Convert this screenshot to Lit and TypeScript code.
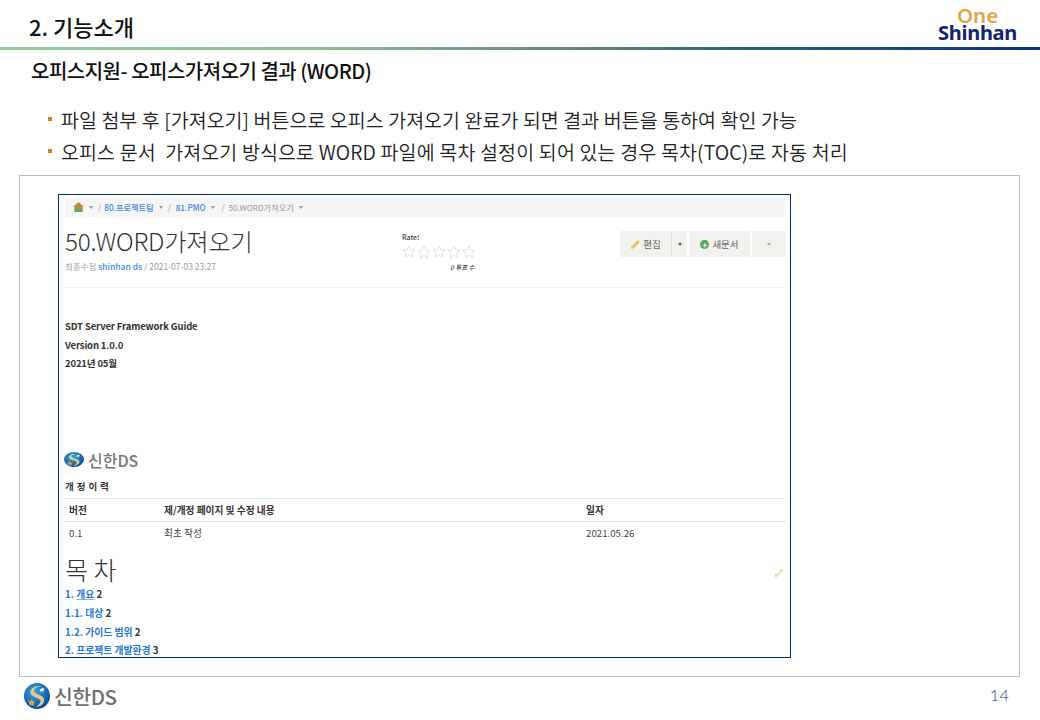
import { LitElement, html, css, svg } from "lit";
import { customElement } from "lit/decorators.js";

const globe = (id: string) => html`<svg class="globe" viewBox="0 0 26 26" preserveAspectRatio="none" aria-hidden="true">
  <defs>
    <radialGradient id="g${id}" cx="0.4" cy="0.35" r="0.75">
      <stop offset="0" stop-color="#3fa6dc"></stop>
      <stop offset="0.65" stop-color="#1565ad"></stop>
      <stop offset="1" stop-color="#0b3f80"></stop>
    </radialGradient>
  </defs>
  <circle cx="13" cy="13" r="13" fill="url(#g${id})"></circle>
  <path d="M17.5 3.2C11 2.2 6 5.5 6.6 10c.5 3.6 6.8 4.2 9.2 6.6 1.9 2-.4 5.4-3.8 7 4.6.4 8.6-3 8-7.4-.6-3.9-7.2-4.6-9.6-7-1.6-1.7.2-5 7.1-6z" fill="#e3c98a"></path>
  <path d="M16 6.6l3-1.8 1.8 2.2-1.8.2.6 2.6-2-1.8-2 .8z" fill="#eef6fb"></path>
  <path d="M4 17l2.4 1.2L8 16l1 2.6 2.2.2-1.6 2 .8 2.4L8 22l-2 .4z" fill="#d6a548"></path>
</svg>`;

const star = svg`<path d="M7 1l1.800 3.900 4.200.5-3.100 2.900.8 4.200L7 10.400 3.300 12.500l.8-4.200L1 5.400l4.200-.5z" fill="#fff" stroke="#e2e2e2" stroke-width="1"></path>`;

const pencil = (cls: string) => html`<svg class=${cls} viewBox="0 0 12 12" aria-hidden="true">
  <path d="M1 11l.8-3L8.500 1.300l2.200 2.200L4 10.200z" fill="currentColor"></path>
  <path d="M1 11l.8-3 2.200 2.200z" fill="#e8c9a0"></path>
</svg>`;

@customElement("app-root")
export class AppRoot extends LitElement {
  static styles = css`
    :host { display: block; width: 1040px; height: 720px; background: #fff; overflow: hidden; font-family: "Noto Sans CJK KR", "Noto Sans", sans-serif; color: #111; }
    .head { height: 47px; box-sizing: border-box; padding: 0 23px 0 29px; display: flex; justify-content: space-between; }
    .head h1 { margin: 0; padding-top: 11px; font-size: 22px; line-height: 30px; font-weight: 500; color: #111; }
    .brand { display: flex; flex-direction: column; align-items: center; padding-top: 7px; font-family: "Noto Sans", sans-serif; font-weight: 700; }
    .brand .one { font-size: 20.500px; line-height: 17px; color: #e2a544; font-weight: 600; }
    .brand .sh { font-size: 20px; line-height: 17px; color: #10256e; letter-spacing: -0.3px; }
    .rule { height: 3px; background: linear-gradient(90deg, #93cb9d 0%, #8ec096 30%, #5f8a78 55%, #2f5f78 72%, #0b3478 100%); }
    .sub { margin: 0; padding: 7px 0 0 31px; font-size: 20px; line-height: 28px; font-weight: 500; letter-spacing: -0.5px; color: #111; }
    .bullets { list-style: none; margin: 0; padding: 18px 0 0 48px; }
    .bullets li { display: flex; align-items: center; gap: 9px; height: 32px; font-size: 19.500px; color: #222; white-space: pre; font-weight: 350; word-spacing: 0.2px; }
    .bullets li.wide { letter-spacing: 0.1px; }
    .bullets li::before { content: ""; width: 4px; height: 4px; background: #c98a1b; flex: none; }
    .panel { margin: 8px 0 0 19px; width: 1001px; height: 502px; box-sizing: border-box; border: 1px solid #bdbdbd; padding: 18px 0 0 38px; }
    .shot { width: 733px; height: 464px; box-sizing: border-box; border: 1px solid #002d62; overflow: hidden; padding: 2px 5px 0 6px; position: relative; color: #333; }
    .crumb { height: 20px; background: #f5f5f5; display: flex; align-items: center; padding-left: 8px; font-size: 8.200px; color: #999; gap: 3px; white-space: pre; }
    .crumb svg { width: 11px; height: 10px; }
    .crumb a { color: #3d8ad6; font-weight: 500; }
    .caret { width: 0; height: 0; border: 2.500px solid transparent; border-top: 3px solid #999; border-bottom: 0; display: inline-block; margin: 0 2px; }
    .page-head { display: grid; grid-template-columns: 337px 1fr auto; height: 70px; border-bottom: 1px dotted #e6e6d2; }
    .page-head h2 { margin: 0; padding-top: 7px; font-size: 24.300px; line-height: 34px; font-weight: 300; color: #333; white-space: nowrap; letter-spacing: -0.2px; }
    .meta { font-size: 8.500px; line-height: 12px; color: #a0a0a0; margin-top: 2px; white-space: pre; }
    .meta a { color: #3d8ad6; font-weight: 500; }
    .rate { padding-top: 16px; font-size: 7px; line-height: 9px; color: #444; font-weight: 500; }
    .stars { display: flex; gap: 1px; margin-top: 3px; height: 14px; }
    .stars svg { width: 14px; height: 14px; }
    .votes { padding-left: 48px; margin-top: 4px; font-style: italic; font-size: 6.500px; line-height: 8px; color: #444; }
    .btns { display: flex; gap: 2px; padding-top: 14px; align-items: flex-start; }
    .btn { height: 26px; background: #f1f1ed; display: flex; align-items: center; justify-content: center; font-size: 9.500px; color: #666; gap: 2px; box-sizing: border-box; }
    .btn.edit { width: 52px; border-right: 1px solid #e2e2dd; }
    .btn.split { width: 15px; margin-left: -2px; }
    .btn.new { width: 61px; }
    .btn.more { width: 33px; }
    .btn .caret { border-top-color: #555; margin: 0; }
    .btn.more .caret { border-top-color: #aaa; }
    .btn svg.ic { width: 11px; height: 11px; color: #ecc04a; }
    .dot { width: 9px; height: 9px; border-radius: 50%; background: #5aa864; color: #fff; font-size: 8px; line-height: 9px; text-align: center; font-weight: 700; margin-right: 1px; }
    .doc { font-size: 9.500px; font-weight: 600; color: #333; }
    .doc p { margin: 0; line-height: 18.500px; white-space: nowrap; letter-spacing: -0.15px; }
    .intro { padding-top: 29px; }
    .ds { display: flex; align-items: center; gap: 4px; margin: 78px 0 0 -1px; height: 18px; }
    .ds .globe { width: 20px; height: 15px; }
    .ds span { font-size: 16px; line-height: 18px; color: #777; font-weight: 500; }
    .doc .h-rev { margin-top: 8px; letter-spacing: 0.4px; font-size: 9.500px; }
    .tbl { margin: 3px 0 0 -1px; width: 721px; border-top: 1px solid #dfece9; }
    .tr { display: grid; grid-template-columns: 95px 422px 1fr; padding-left: 5px; height: 22px; align-items: center; font-size: 9.700px; white-space: nowrap; }
    .tr.h { font-weight: 600; border-bottom: 1px dotted #c9cfdc; }
    .tr.b { font-weight: 400; color: #444; }
    .toc-title { font-size: 25px; line-height: 32px; font-weight: 300; color: #333; margin-top: 9px; }
    .toc { font-size: 9.800px; font-weight: 600; }
    .toc p { margin: 0; line-height: 18.800px; color: #333; white-space: nowrap; letter-spacing: 0; }
    .toc a { color: #1f78d1; }
    .toc u { text-decoration-color: #9ab; }
    svg.pen { position: absolute; right: 5px; top: 372px; width: 11px; height: 11px; color: #f1e3c4; }
    .foot { display: flex; justify-content: space-between; align-items: center; padding: 6px 31px 0 24px; }
    .logo { display: flex; align-items: center; gap: 4px; }
    .logo .globe { width: 26px; height: 26px; }
    .logo span { font-size: 20.500px; line-height: 26px; font-weight: 500; color: #6f6f6f; letter-spacing: -0.5px; }
    .pg { font-size: 16.500px; font-weight: 300; color: #1f3a5c; font-family: Lato, sans-serif; padding-bottom: 2px; }
  `;

  render() {
    return html`
      <header class="head">
        <h1>2. 기능소개</h1>
        <div class="brand"><span class="one">One</span><span class="sh">Shinhan</span></div>
      </header>
      <div class="rule"></div>
      <h3 class="sub">오피스지원- 오피스가져오기 결과 (WORD)</h3>
      <ul class="bullets">
        <li>파일 첨부 후 [가져오기] 버튼으로 오피스 가져오기 완료가 되면 결과 버튼을 통하여 확인 가능</li>
        <li class="wide">오피스 문서  가져오기 방식으로 WORD 파일에 목차 설정이 되어 있는 경우 목차(TOC)로 자동 처리</li>
      </ul>
      <section class="panel">
        <div class="shot">
          <nav class="crumb">
            <svg viewBox="0 0 11 10" aria-hidden="true"><path d="M5.500 0L11 5H9.500v5H6.500V7h-2v3H1.500V5H0z" fill="#b98a4a"></path><path d="M1.500 6.500h8V10h-8z" fill="#6aa55a"></path></svg>
            <i class="caret"></i><span>/</span><a>80.프로젝트팀</a><i class="caret"></i>
            <span>/ </span><a>81.PMO</a><i class="caret"></i>
            <span> /  50.WORD가져오기</span><i class="caret"></i>
          </nav>
          <div class="page-head">
            <div>
              <h2>50.WORD가져오기</h2>
              <div class="meta">최종수정 <a>shinhan ds</a> / 2021-07-03 23:27</div>
            </div>
            <div class="rate">
              Rate!
              <div class="stars">${[0, 1, 2, 3, 4].map(() => html`<svg viewBox="0 0 14 14" aria-hidden="true">${star}</svg>`)}</div>
              <div class="votes">0 투표 수</div>
            </div>
            <div class="btns">
              <div class="btn edit">${pencil("ic")}<span>편집</span></div>
              <div class="btn split"><i class="caret"></i></div>
              <div class="btn new"><span class="dot">+</span><span>새문서</span></div>
              <div class="btn more"><i class="caret"></i></div>
            </div>
          </div>
          <div class="doc">
            <div class="intro">
              <p>SDT Server Framework Guide</p>
              <p>Version 1.0.0</p>
              <p>2021년 05월</p>
            </div>
            <div class="ds">${globe("a")}<span>신한DS</span></div>
            <p class="h-rev">개 정 이 력</p>
            <div class="tbl">
              <div class="tr h"><span>버전</span><span>제/개정 페이지 및 수정 내용</span><span>일자</span></div>
              <div class="tr b"><span>0.1</span><span>최초 작성</span><span>2021.05.26</span></div>
            </div>
            <div class="toc-title">목 차</div>
            <div class="toc">
              <p><a>1. <u>개요</u></a> 2</p>
              <p><a>1.1. 대상</a> 2</p>
              <p><a>1.2. 가이드 범위</a> 2</p>
              <p><a>2. 프로젝트 개발환경</a> 3</p>
            </div>
          </div>
          ${pencil("pen")}
        </div>
      </section>
      <footer class="foot">
        <div class="logo">${globe("b")}<span>신한DS</span></div>
        <div class="pg">14</div>
      </footer>
    `;
  }
}
